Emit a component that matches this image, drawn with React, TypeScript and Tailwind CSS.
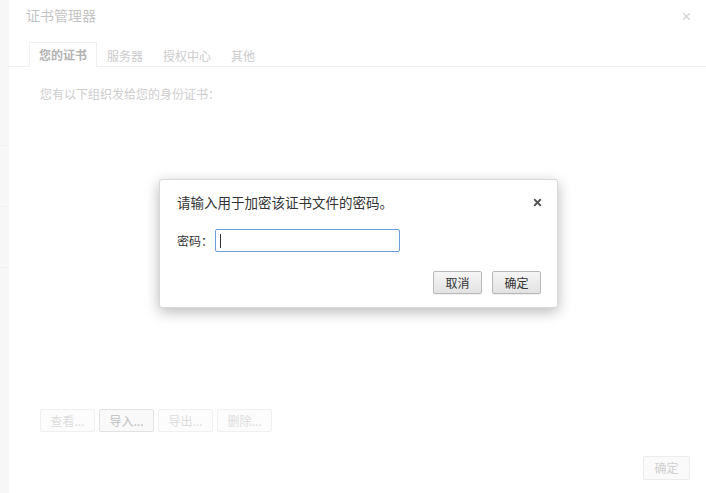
import { X } from 'lucide-react'

const font = { fontFamily: '"Noto Sans CJK SC", "Noto Sans", sans-serif' }

const bgButtons = [
  { label: '查看...', dim: true },
  { label: '导入...', dim: false },
  { label: '导出...', dim: true },
  { label: '删除...', dim: true },
]

function FadedButton({ label, dim }: { label: string; dim: boolean }) {
  return (
    <div
      className={`w-[55px] h-[23px] flex items-center justify-center rounded-[2px] border text-[12px] ${
        dim ? 'border-[#f0f0f0] text-[#dcdcdc] bg-[#fcfcfc]' : 'border-[#e2e2e2] text-[#bdbdbd] bg-[#f9f9f9]'
      }`}
    >
      {label}
    </div>
  )
}

function ModalButton({ label }: { label: string }) {
  return (
    <button className="w-[49px] h-[23px] flex items-center justify-center rounded-[2px] border border-[#b9b9b9] bg-gradient-to-b from-[#f6f6f6] to-[#e2e2e2] text-[12px] text-[#333] shadow-[0_1px_0_rgba(0,0,0,0.06)]">
      {label}
    </button>
  )
}

export default function App() {
  return (
    <div className="relative w-[706px] h-[493px] overflow-hidden bg-white flex" style={font}>
      {/* greyed strip of the page behind */}
      <div className="w-[9px] bg-[#f7f7f7] flex flex-col gap-[60px] pt-[145px]">
        <div className="h-px bg-[#f0f0f0]" />
        <div className="h-px bg-[#f0f0f0]" />
        <div className="h-px bg-[#f0f0f0]" />
      </div>

      {/* certificate manager, faded by the overlay */}
      <div className="flex-1 flex flex-col bg-white">
        <div className="h-[42px] flex items-start justify-between pl-[17px] pr-[14px] pt-[5px]">
          <span className="text-[14px] text-[#c4c4c4]">证书管理器</span>
          <X size={11} strokeWidth={3.5} className="text-[#d6d6d6] mt-[6px]" />
        </div>
        <div className="h-[25px] flex items-end border-b border-[#efefef] pl-[20px]">
          <div className="h-[25px] px-[9px] flex items-center border border-b-0 border-[#efefef] bg-white -mb-px text-[12px] font-bold text-[#b3b3b3]">
            您的证书
          </div>
          <div className="h-[24px] flex items-center ml-[10px] text-[12px] text-[#cbcbcb] gap-[20px] pt-[4px]">
            <span>服务器</span>
            <span>授权中心</span>
            <span>其他</span>
          </div>
        </div>
        <div className="pl-[31px] pt-[18px] text-[12px] text-[#cdcdcd]">您有以下组织发给您的身份证书：</div>
        <div className="flex-1" />
        <div className="pl-[31px] flex gap-[4px]">
          {bgButtons.map((b) => (
            <FadedButton key={b.label} label={b.label} dim={b.dim} />
          ))}
        </div>
        <div className="flex justify-end pr-[16px] pt-[24px] pb-[13px]">
          <div className="w-[47px] h-[24px] flex items-center justify-center rounded-[2px] border border-[#ececec] bg-[#fafafa] text-[12px] text-[#cfcfcf]">
            确定
          </div>
        </div>
      </div>

      {/* password dialog */}
      <div className="absolute left-[159px] top-[179px] w-[399px] h-[129px] bg-white rounded-[3px] shadow-[0_4px_14px_rgba(0,0,0,0.28)] border border-[#d8d8d8] flex flex-col">
        <div className="flex items-center justify-between pl-[17px] pr-[14px] pt-[12px]">
          <span className="text-[13.5px] text-[#333]">请输入用于加密该证书文件的密码。</span>
          <X size={11} strokeWidth={4} className="text-[#555]" />
        </div>
        <div className="flex items-center pl-[17px] pt-[17px]">
          <span className="text-[12px] text-[#333] w-[38px]">密码：</span>
          <div className="w-[185px] h-[23px] rounded-[2px] border border-[#6e9ddb] flex items-center pl-[4px]">
            <div className="w-px h-[14px] bg-[#333]" />
          </div>
        </div>
        <div className="flex-1" />
        <div className="flex justify-end gap-[10px] pr-[16px] pb-[13px]">
          <ModalButton label="取消" />
          <ModalButton label="确定" />
        </div>
      </div>
    </div>
  )
}
